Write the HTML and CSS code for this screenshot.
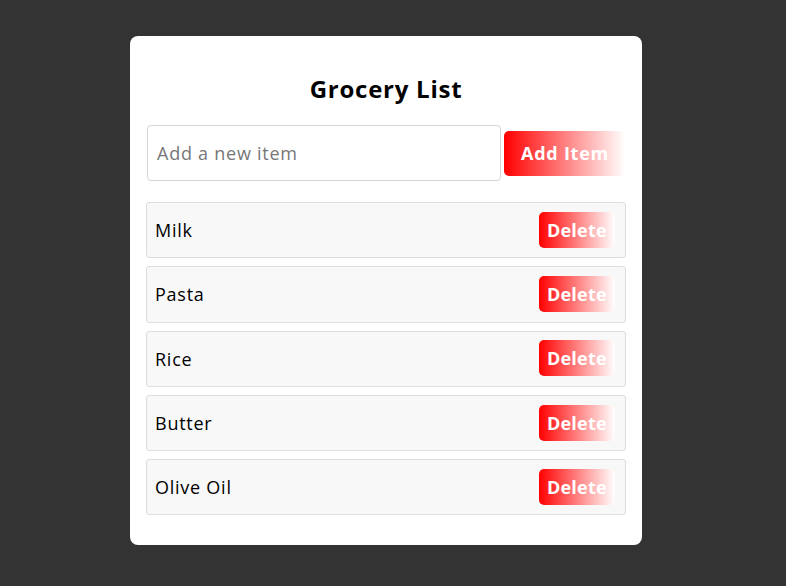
FILE: index.html
```html
<!DOCTYPE html>
<html>
<head>
<meta charset="utf-8">
<link rel="stylesheet" href="styles.css">
</head>
<body>
<div class="card">
  <h2 class="title">Grocery List</h2>
  <div class="add-row">
    <input class="item-input" type="text" placeholder="Add a new item">
    <button class="add-btn">Add Item</button>
  </div>
  <ul class="list">
    <li class="item"><span class="name">Milk</span><button class="del-btn">Delete</button></li>
    <li class="item"><span class="name">Pasta</span><button class="del-btn">Delete</button></li>
    <li class="item"><span class="name">Rice</span><button class="del-btn">Delete</button></li>
    <li class="item"><span class="name">Butter</span><button class="del-btn">Delete</button></li>
    <li class="item"><span class="name">Olive Oil</span><button class="del-btn">Delete</button></li>
  </ul>
</div>
</body>
</html>
```
FILE: styles.css
```css
* { box-sizing: border-box; }
body {
  margin: 0;
  background: #333333;
  font-family: "Open Sans", "Liberation Sans", sans-serif;
  letter-spacing: 0.75px;
  height: 586px;
}
.card {
  width: 512px;
  margin: 36px 0 0 130px;
  background: #fff;
  border-radius: 8px;
  padding: 35px 16px 30px;
}
.title {
  margin: 0 0 18px;
  height: 36px;
  line-height: 36px;
  font-size: 24px;
  font-weight: 700;
  text-align: center;
  color: #000;
}
.add-row {
  display: flex;
  align-items: center;
  gap: 3px;
  padding-left: 1px;
}
.item-input {
  width: 354px;
  height: 56px;
  border: 1px solid #d4d4d4;
  border-radius: 4px;
  padding: 0 9px;
  font-family: inherit;
  font-size: 18px;
  letter-spacing: 0.75px;
  color: #333;
  outline: none;
}
.item-input::placeholder { color: #777; }
.add-btn {
  width: 121px;
  height: 45px;
  border: none;
  border-radius: 5px;
  background: linear-gradient(to right, #ff0000, #ffffff);
  color: #fff;
  font-family: inherit;
  font-size: 18px;
  font-weight: 700;
  letter-spacing: 0.75px;
  padding: 0 0 0 17px;
  text-align: left;
  white-space: nowrap;
}
.list {
  list-style: none;
  margin: 21px 0 0;
  padding: 0;
  display: flex;
  flex-direction: column;
  gap: 8px;
}
.item {
  height: 56.3px;
  display: flex;
  align-items: center;
  justify-content: space-between;
  padding: 0 10px 0 8px;
  background: #f8f8f8;
  border: 1px solid #dddddd;
  border-radius: 3px;
  font-size: 18px;
  color: #000;
}
.del-btn {
  width: 76px;
  height: 36px;
  margin-top: -1px;
  border: none;
  border-radius: 5px;
  background: linear-gradient(to right, #ff0000, #ffffff);
  color: #fff;
  font-family: inherit;
  font-size: 18px;
  font-weight: 700;
  letter-spacing: 0.2px;
  padding: 0 0 0 8px;
  text-align: left;
  white-space: nowrap;
  overflow: hidden;
}
```
